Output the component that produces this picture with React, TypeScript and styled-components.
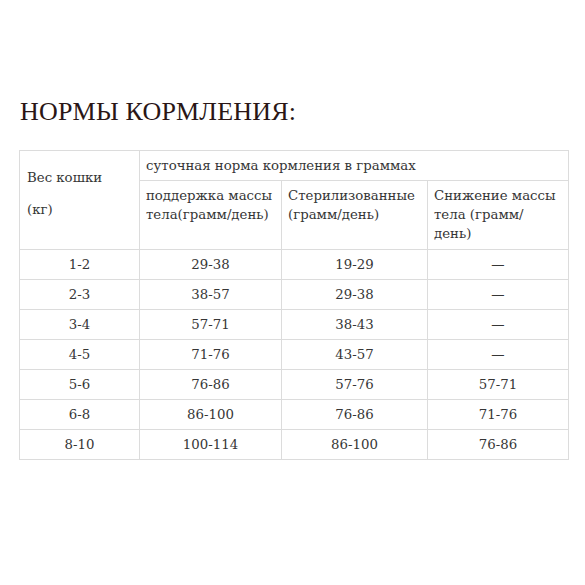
import React from "react";
import styled, { createGlobalStyle } from "styled-components";

const Global = createGlobalStyle`
  html, body { margin: 0; padding: 0; background: #fff; }
  body { font-family: "DejaVu Serif", "Liberation Serif", serif; }
`;

const Page = styled.div`
  padding: 96px 17px 0 19px;
  width: 549px;
`;

const Title = styled.h2`
  margin: 0 0 22px 1px;
  font-family: "Liberation Serif", serif;
  font-weight: 400;
  font-size: 26px;
  line-height: 32px;
  color: #2a1616;
  letter-spacing: 0.2px;
`;

const Table = styled.table`
  width: 549px;
  border-collapse: collapse;
  table-layout: fixed;
  font-family: "DejaVu Serif", "Liberation Serif", serif;
  font-size: 13.3px;
  color: #363636;
`;

const Row = styled.tr<{ $h: number }>`
  height: ${(p) => p.$h}px;
`;

const Cell = styled.td<{ $center?: boolean; $top?: boolean }>`
  border: 1px solid #dcdcdc;
  padding: 0 6px;
  line-height: 19px;
  text-align: ${(p) => (p.$center ? "center" : "left")};
  vertical-align: ${(p) => (p.$top ? "top" : "middle")};
`;

const HeadCell = styled(Cell)`
  padding: 5px 6px 4px;
`;

const LabelCell = styled(Cell)`
  padding: 0 6px 13px 7px;
`;

const Para = styled.p`
  margin: 0;
  & + & { margin-top: 13px; }
`;

const rows: [string, string, string, string][] = [
  ["1-2", "29-38", "19-29", "—"],
  ["2-3", "38-57", "29-38", "—"],
  ["3-4", "57-71", "38-43", "—"],
  ["4-5", "71-76", "43-57", "—"],
  ["5-6", "76-86", "57-76", "57-71"],
  ["6-8", "86-100", "76-86", "71-76"],
  ["8-10", "100-114", "86-100", "76-86"],
];

export default function App() {
  return (
    <>
      <Global />
      <Page>
        <Title>НОРМЫ КОРМЛЕНИЯ:</Title>
        <Table>
          <colgroup>
            <col style={{ width: 120 }} />
            <col style={{ width: 142 }} />
            <col style={{ width: 146 }} />
            <col style={{ width: 141 }} />
          </colgroup>
          <tbody>
            <Row $h={30}>
              <LabelCell rowSpan={2}>
                <Para>Вес кошки</Para>
                <Para>(кг)</Para>
              </LabelCell>
              <Cell colSpan={3}>суточная норма кормления в граммах</Cell>
            </Row>
            <Row $h={69}>
              <HeadCell $top>поддержка массы тела(грамм/день)</HeadCell>
              <HeadCell $top>Стерилизованные (грамм/день)</HeadCell>
              <HeadCell $top>Снижение массы тела (грамм/ день)</HeadCell>
            </Row>
            {rows.map((r) => (
              <Row $h={30} key={r[0]}>
                {r.map((v, i) => (
                  <Cell key={i} $center>
                    {v}
                  </Cell>
                ))}
              </Row>
            ))}
          </tbody>
        </Table>
      </Page>
    </>
  );
}
